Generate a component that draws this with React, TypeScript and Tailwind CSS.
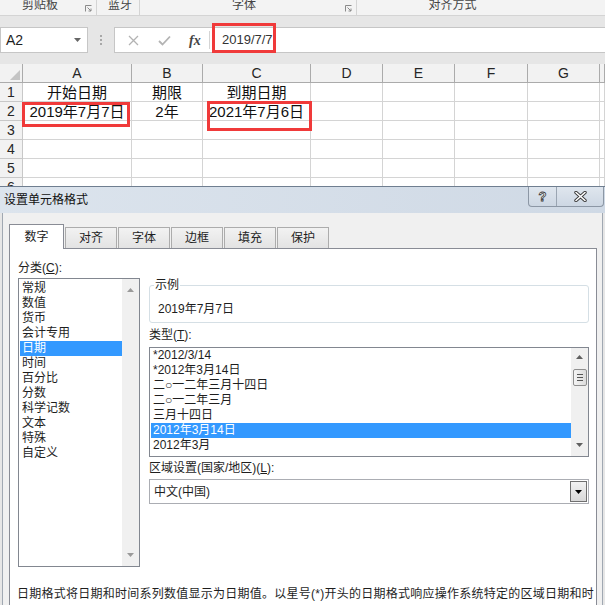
import React from "react";

const categories = ["常规", "数值", "货币", "会计专用", "日期", "时间", "百分比", "分数", "科学记数", "文本", "特殊", "自定义"];
const types = ["*2012/3/14", "*2012年3月14日", "二○一二年三月十四日", "二○一二年三月", "三月十四日", "2012年3月14日", "2012年3月"];
const tabs = ["数字", "对齐", "字体", "边框", "填充", "保护"];
const cols = ["A", "B", "C", "D", "E", "F", "G", ""];
const rows: string[][] = [
    ["开始日期", "期限", "到期日期"],
    ["2019年7月7日", "2年", "2021年7月6日"],
    [],
    [],
    [],
    [],
];

const Tri = ({ up, color = "#606060" }: { up?: boolean; color?: string }) => (
    <svg width="7" height="4" viewBox="0 0 7 4">
        <path d={up ? "M0 4L3.5 0L7 4Z" : "M0 0L3.5 4L7 0Z"} fill={color} />
    </svg>
);

const Launcher = () => (
    <svg width="7" height="7" viewBox="0 0 7 7" className="mt-[5px]">
        <path d="M0.5 6.5V0.5H6.5" stroke="#8a8a8a" fill="none" />
        <path d="M2.5 2.5L6 6M6 3.5V6H3.5" stroke="#8a8a8a" fill="none" />
    </svg>
);

export default function App() {
    return (
        <div className="relative flex flex-col w-[605px] h-[605px] overflow-hidden bg-[#e6e6e6] font-['Liberation_Sans','Noto_Sans_CJK_SC',sans-serif] text-[#1e1e1e]">
            {/* ribbon group labels */}
            <div className="flex h-[16px] shrink-0 bg-[#f3f3f3] border-b border-[#d4d4d4] text-[12px] leading-[12px] text-[#444]">
                <div className="flex w-[97px] justify-between border-r border-[#d4d4d4] pl-[22px] pr-[4px]">
                    <span className="-mt-px">剪贴板</span>
                    <Launcher />
                </div>
                <div className="w-[43px] border-r border-[#d4d4d4] pl-[11px]">
                    <span className="-mt-px block">蓝牙</span>
                </div>
                <div className="flex w-[217px] justify-between border-r border-[#d4d4d4] pl-[92px] pr-[4px]">
                    <span className="-mt-px">字体</span>
                    <Launcher />
                </div>
                <div className="w-[191px] text-center">
                    <span className="-mt-px block">对齐方式</span>
                </div>
            </div>

            {/* formula bar */}
            <div className="mt-[11px] flex h-[26px] shrink-0 items-stretch">
                <div className="flex w-[88px] items-center justify-between border border-[#c6c6c6] bg-white pl-[5px] pr-[6px] text-[14px]">
                    <span>A2</span>
                    <Tri color="#666" />
                </div>
                <div className="flex w-[26px] flex-col items-center justify-center gap-[2px]">
                    <span className="size-[2px] bg-[#a8a8a8]" />
                    <span className="size-[2px] bg-[#a8a8a8]" />
                    <span className="size-[2px] bg-[#a8a8a8]" />
                </div>
                <div className="flex flex-1 border border-r-0 border-[#c6c6c6] bg-white">
                    <div className="my-[3px] flex w-[95px] items-center border-r border-[#d4d4d4]">
                        <svg width="11" height="11" viewBox="0 0 11 11" className="ml-[13px]">
                            <path d="M1 1L10 10M10 1L1 10" stroke="#b3b3b3" strokeWidth="1.3" />
                        </svg>
                        <svg width="13" height="11" viewBox="0 0 13 11" className="ml-[19px]">
                            <path d="M1 6L4.5 9.5L12 1.5" stroke="#b3b3b3" strokeWidth="1.8" fill="none" />
                        </svg>
                        <span className="ml-[18px] font-['Liberation_Serif',serif] text-[14px] italic font-bold text-[#444]">fx</span>
                    </div>
                    <div className="flex items-center pl-[12px] text-[13px] text-[#333]">2019/7/7</div>
                </div>
            </div>

            {/* sheet grid */}
            <div className="mt-[11px] h-[122px] shrink-0 overflow-hidden bg-white">
                <div className="grid grid-cols-[23px_109px_71px_108px_72px_72px_73px_72px_5px]">
                    <div className="relative h-[19px] border-r border-b border-[#ababab] bg-[#f2f2f2]">
                        <svg width="10" height="10" viewBox="0 0 10 10" className="absolute right-[2px] bottom-[2px]">
                            <path d="M10 0V10H0Z" fill="#c4c4c4" />
                        </svg>
                    </div>
                    {cols.map((c, i) => (
                        <div key={i} className="flex h-[19px] items-center justify-center border-r border-b border-[#ababab] bg-[#f2f2f2] text-[14px] text-[#262626]">
                            {c}
                        </div>
                    ))}
                    {rows.map((r, ri) => (
                        <React.Fragment key={ri}>
                            <div className="flex h-[19px] items-center justify-center border-r border-b border-[#c8c8c8] bg-[#f2f2f2] text-[14px] text-[#262626]">
                                {ri + 1}
                            </div>
                            {cols.map((_, ci) => (
                                <div key={ci} className="flex h-[19px] items-center justify-center whitespace-nowrap border-r border-b border-[#d4d4d4] text-[15px] leading-[19px] text-[#111]">
                                    {r[ci] ?? ""}
                                </div>
                            ))}
                        </React.Fragment>
                    ))}
                </div>
            </div>

            {/* format cells dialog */}
            <div className="flex flex-1 flex-col border-t border-[#6f7e90]">
                <div className="flex h-[26px] shrink-0 items-start justify-between bg-gradient-to-r from-[#dce4ed] to-[#cfd9e5]">
                    <span className="pl-[4px] pt-[6px] text-[12px] leading-[14px] text-[#111]">设置单元格格式</span>
                    <div className="mr-[1px] flex h-[20px] rounded-b-[4px] border border-t-0 border-[#8c97a5] bg-gradient-to-b from-[#dfe6ee] to-[#cdd7e3]">
                        <div className="flex w-[28px] items-center justify-center border-r border-[#9aa5b2] text-[13px] font-bold text-white [-webkit-text-stroke:0.8px_#3a3a3a]">?</div>
                        <div className="flex w-[46px] items-center justify-center">
                            <svg width="13" height="11" viewBox="0 0 13 11">
                                <path d="M2 1.5L11 9.5M11 1.5L2 9.5" stroke="#3a3a3a" strokeWidth="3.4" strokeLinecap="round" />
                                <path d="M2 1.5L11 9.5M11 1.5L2 9.5" stroke="#ffffff" strokeWidth="1.6" strokeLinecap="round" />
                            </svg>
                        </div>
                    </div>
                </div>

                <div className="mx-[2px] flex flex-1 flex-col border-x border-[#a0a8b2] bg-[#f0f0f0] pt-[11px]">
                    {/* tabs */}
                    <div className="ml-[6px] flex h-[24px] items-start text-[12px]">
                        {tabs.map((t, i) =>
                            i === 0 ? (
                                <div key={t} className="relative z-10 flex h-[25px] w-[55px] items-center justify-center border border-b-0 border-[#898c95] bg-white">
                                    {t}
                                </div>
                            ) : (
                                <div key={t} className="ml-[1px] mt-[3px] flex h-[21px] w-[52px] items-center justify-center border border-b-0 border-[#acacac] bg-gradient-to-b from-[#f2f2f2] to-[#e3e3e3]">
                                    {t}
                                </div>
                            )
                        )}
                    </div>

                    {/* panel */}
                    <div className="ml-[6px] flex w-[588px] flex-1 flex-col border border-[#898c95] bg-white pl-[8px] pt-[11px] text-[12px]">
                        <div className="flex">
                            <div className="w-[122px]">
                                <div className="h-[16px] leading-[16px]">
                                    分类(<span className="underline">C</span>):
                                </div>
                                <div className="mt-[2px] flex h-[289px] border border-[#828790] bg-white">
                                    <div className="flex-1 pl-[1px] pt-[2px]">
                                        {categories.map((c) => (
                                            <div key={c} className={`h-[15px] pl-[2px] leading-[15px] ${c === "日期" ? "bg-[#3399ff] text-white" : ""}`}>
                                                {c}
                                            </div>
                                        ))}
                                    </div>
                                    <div className="flex w-[17px] flex-col items-center justify-between bg-[#f0f0f0] py-[9px]">
                                        <Tri up color="#9a9a9a" />
                                        <Tri color="#9a9a9a" />
                                    </div>
                                </div>
                            </div>

                            <div className="ml-[9px] w-[440px]">
                                <fieldset className="mt-[18px] rounded-[3px] border border-[#d5dfe5] px-[4px] pb-[6px]">
                                    <legend className="px-[1px] leading-[14px]">示例</legend>
                                    <div className="pl-[4px] pt-[10px] leading-[14px]">2019年7月7日</div>
                                </fieldset>
                                <div className="mt-[5px] h-[14px] leading-[14px]">
                                    类型(<span className="underline">T</span>):
                                </div>
                                <div className="mt-[5px] flex h-[110px] border border-[#828790] bg-white">
                                    <div className="flex-1 pl-[1px]">
                                        {types.map((t) => (
                                            <div key={t} className={`h-[15px] pl-[2px] leading-[15px] ${t === "2012年3月14日" ? "bg-[#3399ff] text-white" : ""}`}>
                                                {t}
                                            </div>
                                        ))}
                                    </div>
                                    <div className="flex w-[17px] flex-col items-center bg-[#f0f0f0] pt-[7px] pb-[9px]">
                                        <Tri up />
                                        <div className="mt-[10px] flex h-[17px] w-[14px] flex-col items-center justify-center gap-[2px] rounded-[2px] border border-[#8f8f8f] bg-gradient-to-r from-[#f4f4f4] to-[#dcdcdc]">
                                            <span className="h-px w-[6px] bg-[#555]" />
                                            <span className="h-px w-[6px] bg-[#555]" />
                                            <span className="h-px w-[6px] bg-[#555]" />
                                        </div>
                                        <div className="flex-1" />
                                        <Tri />
                                    </div>
                                </div>
                                <div className="mt-[4px] h-[14px] leading-[14px]">
                                    区域设置(国家/地区)(<span className="underline">L</span>):
                                </div>
                                <div className="mt-[4px] flex h-[25px] items-center justify-between border border-[#abadb3] bg-white pl-[4px] pr-[1px]">
                                    <span>中文(中国)</span>
                                    <div className="flex h-[21px] w-[17px] items-center justify-center border border-[#707070] bg-gradient-to-b from-[#f2f2f2] to-[#d8d8d8]">
                                        <Tri color="#000" />
                                    </div>
                                </div>
                            </div>
                        </div>
                        <p className="-ml-[1px] mt-[18px] pr-[2px] leading-[18px] tracking-[0.25px]">
                            日期格式将日期和时间系列数值显示为日期值。以星号(*)开头的日期格式响应操作系统特定的区域日期和时间设置的更改。
                        </p>
                    </div>
                </div>
            </div>

            {/* red annotation boxes */}
            <div className="absolute left-[212px] top-[23px] h-[30px] w-[64px] border-[3px] border-[#f03a3a]" />
            <div className="absolute left-[22px] top-[102px] h-[25px] w-[108px] border-[3px] border-[#f03a3a]" />
            <div className="absolute left-[207px] top-[101px] h-[30px] w-[105px] border-[3px] border-[#f03a3a]" />
        </div>
    );
}
